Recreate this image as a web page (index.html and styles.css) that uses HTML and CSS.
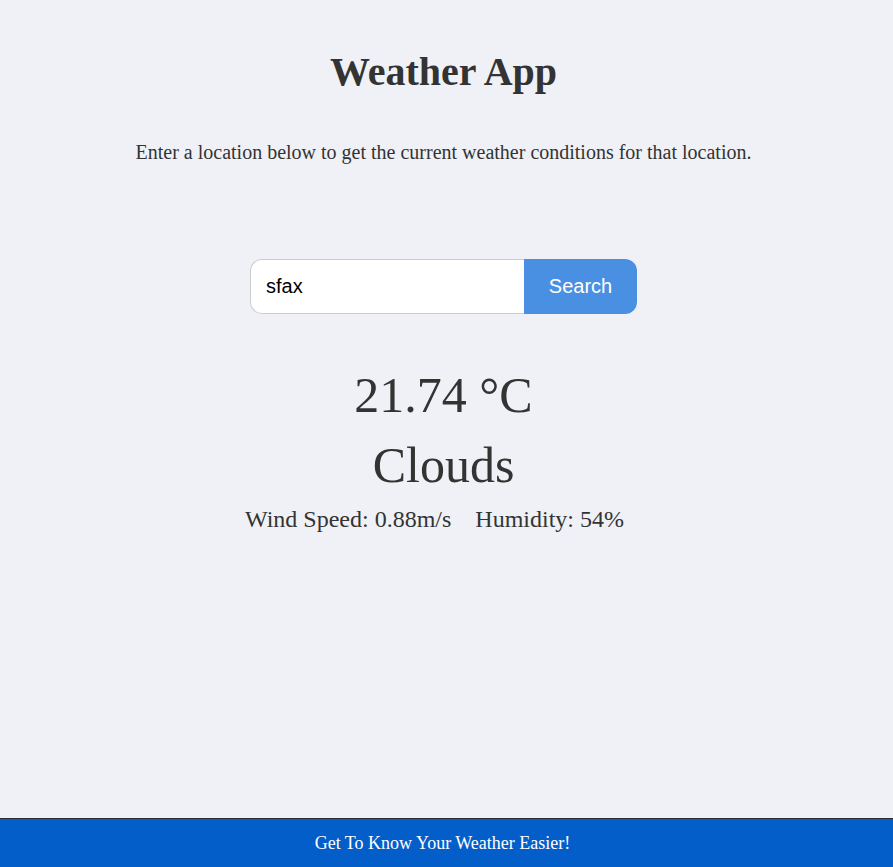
FILE: index.html
```html
<!DOCTYPE html>
<html>
<head>
<meta charset="utf-8">
<link rel="stylesheet" href="styles.css">
</head>
<body>
<main class="app">
  <h1 class="title">Weather App</h1>
  <p class="intro">Enter a location below to get the current weather conditions for that location.</p>
  <form class="search">
    <input class="search-input" type="text" value="sfax">
    <button class="search-btn" type="button">Search</button>
  </form>
  <section class="result">
    <div class="temp">21.74 °C</div>
    <div class="cond">Clouds</div>
    <div class="details"><span>Wind Speed: 0.88m/s</span><span class="hum">Humidity: 54%</span></div>
  </section>
</main>
<footer class="footer">Get To Know Your Weather Easier!</footer>
</body>
</html>
```
FILE: styles.css
```css
html, body {
  margin: 0;
  padding: 0;
  height: 100%;
}
body {
  background: #f0f1f6;
  color: #333333;
  font-family: "Liberation Serif", "Times New Roman", serif;
  display: flex;
  flex-direction: column;
}
.app {
  flex: 1;
  display: flex;
  flex-direction: column;
  align-items: center;
  padding-right: 6px;
}
.title {
  font-size: 40px;
  font-weight: bold;
  margin: 49px 0 0;
  line-height: 46px;
}
.intro {
  font-size: 20px;
  margin: 45px 0 0;
  line-height: 24px;
}
.search {
  display: flex;
  margin-top: 95px;
}
.search-input {
  width: 274px;
  height: 55px;
  box-sizing: border-box;
  border: 1px solid #cccccc;
  border-right: none;
  border-radius: 12px 0 0 12px;
  padding: 0 15px;
  font-family: "Liberation Sans", Arial, sans-serif;
  font-size: 20px;
  color: #000;
  background: #fff;
  outline: none;
}
.search-btn {
  width: 113px;
  height: 55px;
  border: none;
  border-radius: 0 12px 12px 0;
  background: #4a90e2;
  color: #fff;
  font-family: "Liberation Sans", Arial, sans-serif;
  font-size: 20px;
  padding: 0;
}
.result {
  display: flex;
  flex-direction: column;
  align-items: center;
  margin-top: 51px;
}
.temp {
  font-size: 50px;
  line-height: 60px;
}
.cond {
  font-size: 50px;
  line-height: 80px;
}
.details {
  font-size: 24px;
  line-height: 28px;
  display: flex;
  gap: 24px;
}
.hum {
  margin-right: 18px;
}
.footer {
  background: #035eca;
  border-top: 1px solid #2a2f3a;
  color: #fff;
  text-align: center;
  font-size: 18px;
  height: 48px;
  line-height: 48px;
  padding-right: 8px;
}
```
